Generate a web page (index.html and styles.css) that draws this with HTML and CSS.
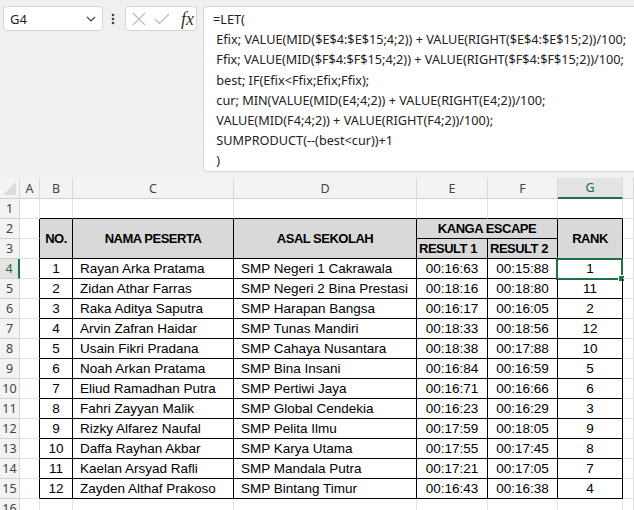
FILE: index.html
```html
<!DOCTYPE html>
<html>
<head>
<meta charset="utf-8">
<link rel="stylesheet" href="styles.css">
</head>
<body>
<div class="topbar">
  <div class="namebox">
    <span class="cellref">G4</span>
    <svg class="chev" width="10" height="6" viewBox="0 0 10 6"><polyline points="1,1 5,5 9,1" fill="none" stroke="#444" stroke-width="1.2"/></svg>
  </div>
  <svg class="vdots" width="4" height="12" viewBox="0 0 4 12"><circle cx="2" cy="2" r="1.3" fill="#444"/><circle cx="2" cy="6" r="1.3" fill="#444"/><circle cx="2" cy="10" r="1.3" fill="#444"/></svg>
  <div class="fxbox">
    <svg width="14" height="14" viewBox="0 0 14 14"><path d="M1 1 L13 13 M13 1 L1 13" stroke="#b8b8b8" stroke-width="1.1" fill="none"/></svg>
    <svg width="16" height="12" viewBox="0 0 16 12"><polyline points="1,6 5.5,10.5 15,1" stroke="#b8b8b8" stroke-width="1.1" fill="none"/></svg>
    <span class="fx">fx</span>
  </div>
  <div class="formula">=LET(
 Efix; VALUE(MID($E$4:$E$15;4;2)) + VALUE(RIGHT($E$4:$E$15;2))/100;
 Ffix; VALUE(MID($F$4:$F$15;4;2)) + VALUE(RIGHT($F$4:$F$15;2))/100;
 best; IF(Efix&lt;Ffix;Efix;Ffix);
 cur; MIN(VALUE(MID(E4;4;2)) + VALUE(RIGHT(E4;2))/100;
 VALUE(MID(F4;4;2)) + VALUE(RIGHT(F4;2))/100);
 SUMPRODUCT(--(best&lt;cur))+1
 )</div>
</div>
<div class="sheet" id="sheet"></div>
<script src="app.js"></script>
</body>
</html>
```
FILE: styles.css
```css
html, body { margin: 0; padding: 0; }
body {
  width: 634px; height: 510px; overflow: hidden;
  background: #f0f0f0;
  font-family: "Liberation Sans", Arial, sans-serif;
}
.topbar {
  height: 178px; box-sizing: border-box;
  padding: 6px 0 6px 3px;
  display: flex; align-items: flex-start;
  background: #f0f0f0;
}
.namebox {
  width: 100px; height: 25px; box-sizing: border-box;
  background: #fff; border: 1px solid #d6d6d6; border-radius: 4px;
  display: flex; align-items: center; justify-content: space-between;
  padding: 0 6px 0 6px;
}
.cellref { font-family: "Noto Sans", sans-serif; font-size: 13px; color: #222; }
.chev { margin-top: 1px; }
.vdots { margin: 7px 0 0 8px; }
.fxbox {
  margin-left: 10px;
  width: 72px; height: 25px; box-sizing: border-box;
  background: #fff; border: 1px solid #d6d6d6; border-radius: 4px;
  display: flex; align-items: center; gap: 8px; padding: 0 0 0 6px;
}
.fx {
  font-family: "Liberation Serif", "DejaVu Serif", serif; font-style: italic;
  font-size: 18px; color: #333; margin-left: 3px; line-height: 1;
}
.formula {
  margin-left: 6px; flex: 1; height: 166px; box-sizing: border-box;
  background: #fff; border: 1px solid #d6d6d6; border-right: none; border-radius: 4px 0 0 4px;
  padding: 2px 0 0 9px;
  white-space: pre;
  font-family: "Noto Sans", sans-serif; font-size: 12.7px; line-height: 20.2px; color: #222;
  overflow: hidden;
}
.sheet {
  display: grid;
  grid-template-columns: 20px 20px 33px 161px 183px 71px 70px 65px 1fr;
  grid-template-rows: 21px repeat(16, 20px);
  background: #fff;
}
.c {
  box-sizing: border-box;
  border-right: 1px solid #e1e1e1; border-bottom: 1px solid #e1e1e1;
  font-family: "Liberation Sans", Arial, sans-serif;
  font-size: 13.5px; color: #000;
  display: flex; align-items: center; white-space: nowrap; overflow: visible;
  position: relative;
}
.hdr {
  background: #f3f3f3; color: #444; justify-content: center;
  font-family: "Noto Sans", sans-serif; font-size: 12.5px;
  border-right-color: #d8d8d8; border-bottom-color: #d0d0d0;
}
.rowhdr { justify-content: center; }
.corner { background: #f3f3f3; }
.corner::after {
  content: ""; position: absolute; right: 3px; bottom: 3px;
  border-left: 13px solid transparent; border-bottom: 13px solid #dcdcdc;
}
.hdr.sel-col { background: #e3e3e3; color: #1e6b40; border-bottom: 2px solid #1e7145; }
.hdr.sel-row { background: #e3e3e3; color: #1e6b40; border-right: 2px solid #1e7145; }
.bt { border-bottom-color: #000; }
.br { border-right-color: #000; }
.th {
  background: #d9d9d9; font-weight: bold; justify-content: center;
  font-size: 13px; letter-spacing: -0.5px;
  border-right-color: #000; border-bottom-color: #000;
}
.th.left { justify-content: flex-start; padding-left: 2px; }
.td { border-right-color: #000; border-bottom-color: #000; }
.ctr { justify-content: center; }
.lft { padding-left: 7px; }
.selbox {
  position: absolute; left: -2px; top: -1px; right: -1px; bottom: -2px;
  border: 2px solid #1e7145; pointer-events: none;
}
.handle {
  position: absolute; right: -4px; bottom: -4px; width: 5px; height: 5px;
  background: #1e7145; border: 1px solid #fff;
}
```
FILE: app.js
```js
const rows = [
  [1,"Rayan Arka Pratama","SMP Negeri 1 Cakrawala","00:16:63","00:15:88",1],
  [2,"Zidan Athar Farras","SMP Negeri 2 Bina Prestasi","00:18:16","00:18:80",11],
  [3,"Raka Aditya Saputra","SMP Harapan Bangsa","00:16:17","00:16:05",2],
  [4,"Arvin Zafran Haidar","SMP Tunas Mandiri","00:18:33","00:18:56",12],
  [5,"Usain Fikri Pradana","SMP Cahaya Nusantara","00:18:38","00:17:88",10],
  [6,"Noah Arkan Pratama","SMP Bina Insani","00:16:84","00:16:59",5],
  [7,"Eliud Ramadhan Putra","SMP Pertiwi Jaya","00:16:71","00:16:66",6],
  [8,"Fahri Zayyan Malik","SMP Global Cendekia","00:16:23","00:16:29",3],
  [9,"Rizky Alfarez Naufal","SMP Pelita Ilmu","00:17:59","00:18:05",9],
  [10,"Daffa Rayhan Akbar","SMP Karya Utama","00:17:55","00:17:45",8],
  [11,"Kaelan Arsyad Rafli","SMP Mandala Putra","00:17:21","00:17:05",7],
  [12,"Zayden Althaf Prakoso","SMP Bintang Timur","00:16:43","00:16:38",4]
];
const sheet = document.getElementById("sheet");
function cell(cls, text, col, row, cs, rs) {
  const d = document.createElement("div");
  d.className = "c " + cls;
  if (text !== undefined && text !== null) d.textContent = text;
  d.style.gridColumn = col + (cs ? " / span " + cs : "");
  d.style.gridRow = row + (rs ? " / span " + rs : "");
  sheet.appendChild(d);
  return d;
}
cell("hdr corner", "", 1, 1);
["A","B","C","D","E","F","G","H"].forEach((l, i) => {
  cell("hdr" + (l === "G" ? " sel-col" : ""), l === "H" ? "" : l, i + 2, 1);
});
for (let r = 1; r <= 16; r++) {
  const g = r + 1;
  cell("hdr rowhdr" + (r === 4 ? " sel-row" : ""), r, 1, g);
  const inTable = r >= 2 && r <= 15;
  cell(inTable ? "br" : "", "", 2, g);
  if (r === 1) {
    for (let c = 3; c <= 8; c++) cell("bt", "", c, g);
    cell("", "", 9, g);
  } else if (r === 2) {
    cell("th", "NO.", 3, g, 0, 2);
    cell("th", "NAMA PESERTA", 4, g, 0, 2);
    cell("th", "ASAL SEKOLAH", 5, g, 0, 2);
    cell("th", "KANGA ESCAPE", 6, g, 2, 0);
    cell("th", "RANK", 8, g, 0, 2);
    cell("", "", 9, g);
  } else if (r === 3) {
    cell("th left", "RESULT 1", 6, g);
    cell("th left", "RESULT 2", 7, g);
    cell("", "", 9, g);
  } else if (r <= 15) {
    const d = rows[r - 4];
    cell("td ctr", d[0], 3, g);
    cell("td lft", d[1], 4, g);
    cell("td lft", d[2], 5, g);
    cell("td ctr", d[3], 6, g);
    cell("td ctr", d[4], 7, g);
    const rk = cell("td ctr", d[5], 8, g);
    if (r === 4) {
      const s = document.createElement("div"); s.className = "selbox";
      const h = document.createElement("div"); h.className = "handle";
      s.appendChild(h); rk.appendChild(s);
    }
    cell("", "", 9, g);
  } else {
    for (let c = 3; c <= 9; c++) cell("", "", c, g);
  }
}
```
